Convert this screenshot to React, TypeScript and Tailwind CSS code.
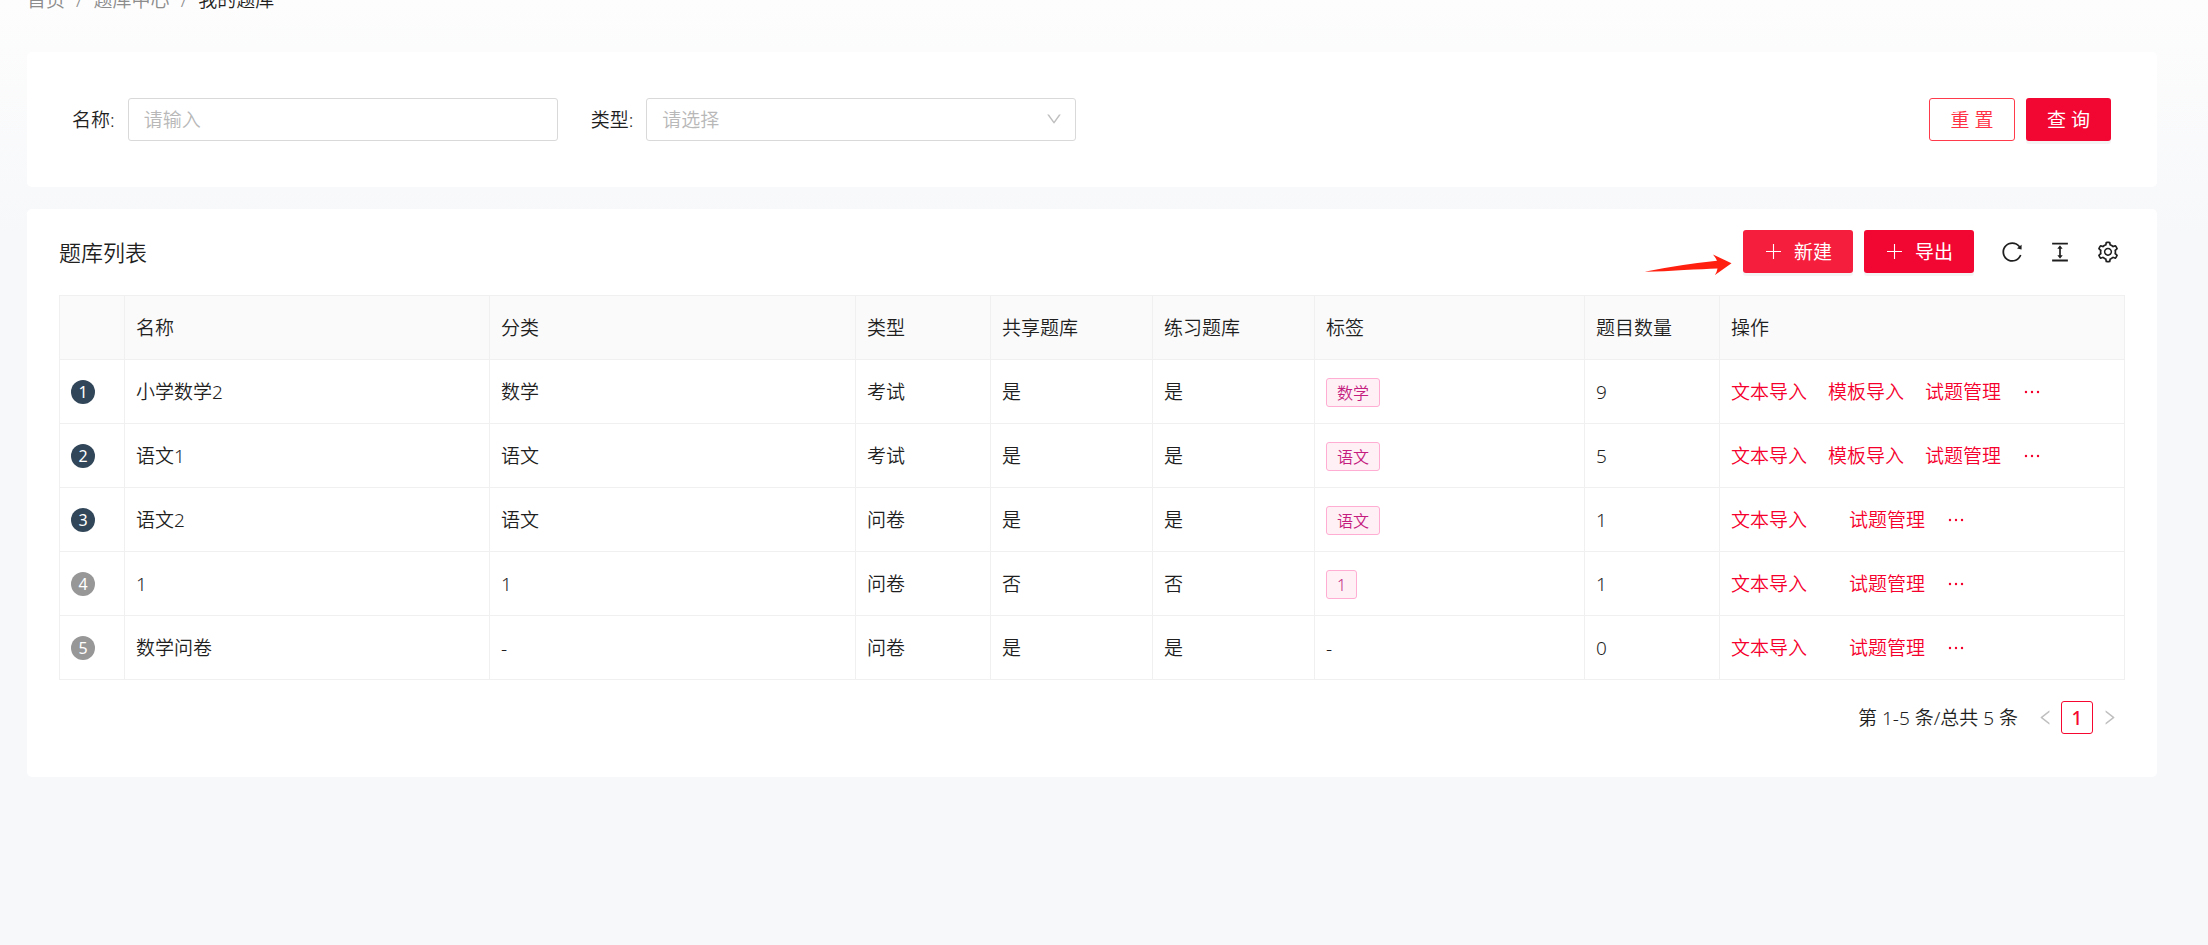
import type { ReactNode } from "react";
import {
  AiOutlineColumnHeight,
  AiOutlineDown,
  AiOutlineEllipsis,
  AiOutlineLeft,
  AiOutlineReload,
  AiOutlineRight,
  AiOutlineSetting,
} from "react-icons/ai";

type Bank = {
  name: string;
  category: string;
  type: string;
  shared: string;
  practice: string;
  tag: string;
  count: number;
};

const banks: Bank[] = [
  { name: "小学数学2", category: "数学", type: "考试", shared: "是", practice: "是", tag: "数学", count: 9 },
  { name: "语文1", category: "语文", type: "考试", shared: "是", practice: "是", tag: "语文", count: 5 },
  { name: "语文2", category: "语文", type: "问卷", shared: "是", practice: "是", tag: "语文", count: 1 },
  { name: "1", category: "1", type: "问卷", shared: "否", practice: "否", tag: "1", count: 1 },
  { name: "数学问卷", category: "-", type: "问卷", shared: "是", practice: "是", tag: "-", count: 0 },
];

const headers = ["", "名称", "分类", "类型", "共享题库", "练习题库", "标签", "题目数量", "操作"];

function Cell({ children }: { children: ReactNode }) {
  return <td className="border border-[#f0f0f0] px-[11px]">{children}</td>;
}

function ActionLink({ children }: { children: ReactNode }) {
  return (
    <a href="#" className="whitespace-nowrap text-[#f5002d]">
      {children}
    </a>
  );
}

function PlusIcon() {
  return (
    <svg viewBox="0 0 19 19" className="size-[19px]" fill="none" stroke="currentColor" aria-hidden="true">
      <path d="M9.5 2V17M2 9.5H17" strokeWidth="1.1" />
    </svg>
  );
}

function PrimaryButton({ children, className }: { children: ReactNode; className: string }) {
  return (
    <button
      type="button"
      className={`flex h-[43px] items-center justify-center rounded-[3px] font-normal text-white shadow-[0_3px_0_rgba(0,0,0,0.045)] ${className}`}
    >
      {children}
    </button>
  );
}

function Breadcrumb() {
  return (
    <nav aria-label="面包屑" className="-mt-4 flex h-8 items-center gap-[11px] text-[#8c8c8c]">
      <a href="#">首页</a>
      <span>/</span>
      <a href="#">题库中心</a>
      <span>/</span>
      <span className="text-[#1f1f1f]">我的题库</span>
    </nav>
  );
}

function SearchForm() {
  return (
    <form className="mt-9 flex items-center gap-[33px] rounded-[5px] bg-white py-[46px] pr-[46px] pl-[45px]">
      <div className="flex items-center gap-[13px]">
        <label htmlFor="name">名称:</label>
        <input
          id="name"
          type="text"
          placeholder="请输入"
          className="h-[43px] w-[430px] rounded-[3px] border border-[#d9d9d9] bg-white px-[15px] outline-none placeholder:text-[#b8b8b8]"
        />
      </div>
      <div className="flex items-center gap-[13px]">
        <label htmlFor="type">类型:</label>
        <div className="relative">
          <select
            id="type"
            defaultValue=""
            className="h-[43px] w-[430px] appearance-none rounded-[3px] border border-[#d9d9d9] bg-white px-[15px] text-[#b8b8b8] outline-none"
          >
            <option value="">请选择</option>
            <option value="exam">考试</option>
            <option value="survey">问卷</option>
          </select>
          <AiOutlineDown className="pointer-events-none absolute top-3 right-[13px] size-[18px] text-[#bfbfbf]" />
        </div>
      </div>
      <div className="ml-auto flex gap-[11px]">
        <button
          type="reset"
          className="h-[43px] w-[86px] rounded-[3px] border border-[#ff3b4b] bg-white text-[#ff3043]"
        >
          重 置
        </button>
        <PrimaryButton className="w-[85px] bg-[#f20732]">查 询</PrimaryButton>
      </div>
    </form>
  );
}

function Toolbar() {
  return (
    <div className="flex items-center justify-between pt-[21px] pb-[22px]">
      <h1 className="text-[22px] leading-8">题库列表</h1>
      <div className="relative flex items-center gap-[11px]">
        <svg
          viewBox="0 0 88 22"
          className="absolute top-6 right-full mr-[11px] h-[22px] w-[88px]"
          aria-hidden="true"
        >
          <path d="M0.5 17.7 Q36 10.5 73 6.7 Q71.5 3.5 69 0.5 L87.5 9.3 L71 21 Q73 17.5 73.5 14.5 Q60 15 40 16 Q20 17.5 0.5 17.7 Z" fill="#ff2010" />
        </svg>
        <PrimaryButton className="w-[110px] gap-[11px] bg-[#f51f3d]">
          <PlusIcon />
          新建
        </PrimaryButton>
        <PrimaryButton className="w-[110px] gap-[11px] bg-[#f20732]">
          <PlusIcon />
          导出
        </PrimaryButton>
        <div className="ml-[15px] flex items-center gap-6 pr-[5px] text-2xl text-[#1f1f1f]">
          <button type="button" aria-label="刷新">
            <AiOutlineReload />
          </button>
          <button type="button" aria-label="密度">
            <AiOutlineColumnHeight />
          </button>
          <button type="button" aria-label="列设置">
            <AiOutlineSetting />
          </button>
        </div>
      </div>
    </div>
  );
}

function BankTable() {
  return (
    <table className="w-full table-fixed border-collapse text-left">
      <colgroup>
        <col className="w-[65px]" />
        <col className="w-[365px]" />
        <col className="w-[366px]" />
        <col className="w-[135px]" />
        <col className="w-[162px]" />
        <col className="w-[162px]" />
        <col className="w-[270px]" />
        <col className="w-[135px]" />
        <col className="w-[405px]" />
      </colgroup>
      <thead>
        <tr className="h-16 bg-[#fafafa]">
          {headers.map((h, i) => (
            <th key={i} className="border border-[#f0f0f0] px-[11px] font-[350]">
              {h}
            </th>
          ))}
        </tr>
      </thead>
      <tbody>
        {banks.map((b, i) => (
          <tr key={b.name} className="h-16">
            <Cell>
              <span
                className={`flex size-6 items-center justify-center rounded-full text-base font-normal text-white ${
                  i < 3 ? "bg-[#314659]" : "bg-[#979797]"
                }`}
              >
                {i + 1}
              </span>
            </Cell>
            <Cell>{b.name}</Cell>
            <Cell>{b.category}</Cell>
            <Cell>{b.type}</Cell>
            <Cell>{b.shared}</Cell>
            <Cell>{b.practice}</Cell>
            <Cell>
              {b.tag === "-" ? (
                "-"
              ) : (
                <span className="inline-flex h-[29px] items-center rounded-[3px] border border-[#ffadd2] bg-[#fff0f6] px-[10px] align-middle text-base text-[#c41d7f]">
                  {b.tag}
                </span>
              )}
            </Cell>
            <Cell>{b.count}</Cell>
            <Cell>
              <div className="flex items-center gap-[21px]">
                <ActionLink>文本导入</ActionLink>
                {b.type === "考试" ? <ActionLink>模板导入</ActionLink> : <span />}
                <ActionLink>试题管理</ActionLink>
                <button
                  type="button"
                  aria-label="更多"
                  className="flex size-[19px] items-center justify-center text-[#f5002d]"
                >
                  <AiOutlineEllipsis className="size-[22px] shrink-0" />
                </button>
              </div>
            </Cell>
          </tr>
        ))}
      </tbody>
    </table>
  );
}

function Pagination() {
  return (
    <div className="flex items-center justify-end pt-[21px] pb-[43px]">
      <span className="mr-[11px]">第 1-5 条/总共 5 条</span>
      <button type="button" aria-label="上一页" className="flex size-8 items-center justify-center text-[#bfbfbf]">
        <AiOutlineLeft />
      </button>
      <button
        type="button"
        className="h-[33px] w-8 rounded-[3px] border border-[#f5072f] font-medium text-[#f5072f]"
      >
        1
      </button>
      <button type="button" aria-label="下一页" className="flex size-8 items-center justify-center text-[#bfbfbf]">
        <AiOutlineRight />
      </button>
    </div>
  );
}

export default function App() {
  return (
    <div className="flow-root min-h-screen bg-linear-to-b from-[#fdfdfd] to-[#f7f8fa] to-25% pr-[51px] pl-[27px] font-['Noto_Sans','Noto_Sans_CJK_SC',sans-serif] text-[19px] leading-[30px] font-[350] text-[#1f1f1f]">
      <Breadcrumb />
      <SearchForm />
      <main className="mt-[22px] rounded-[5px] bg-white px-8">
        <Toolbar />
        <BankTable />
        <Pagination />
      </main>
    </div>
  );
}
